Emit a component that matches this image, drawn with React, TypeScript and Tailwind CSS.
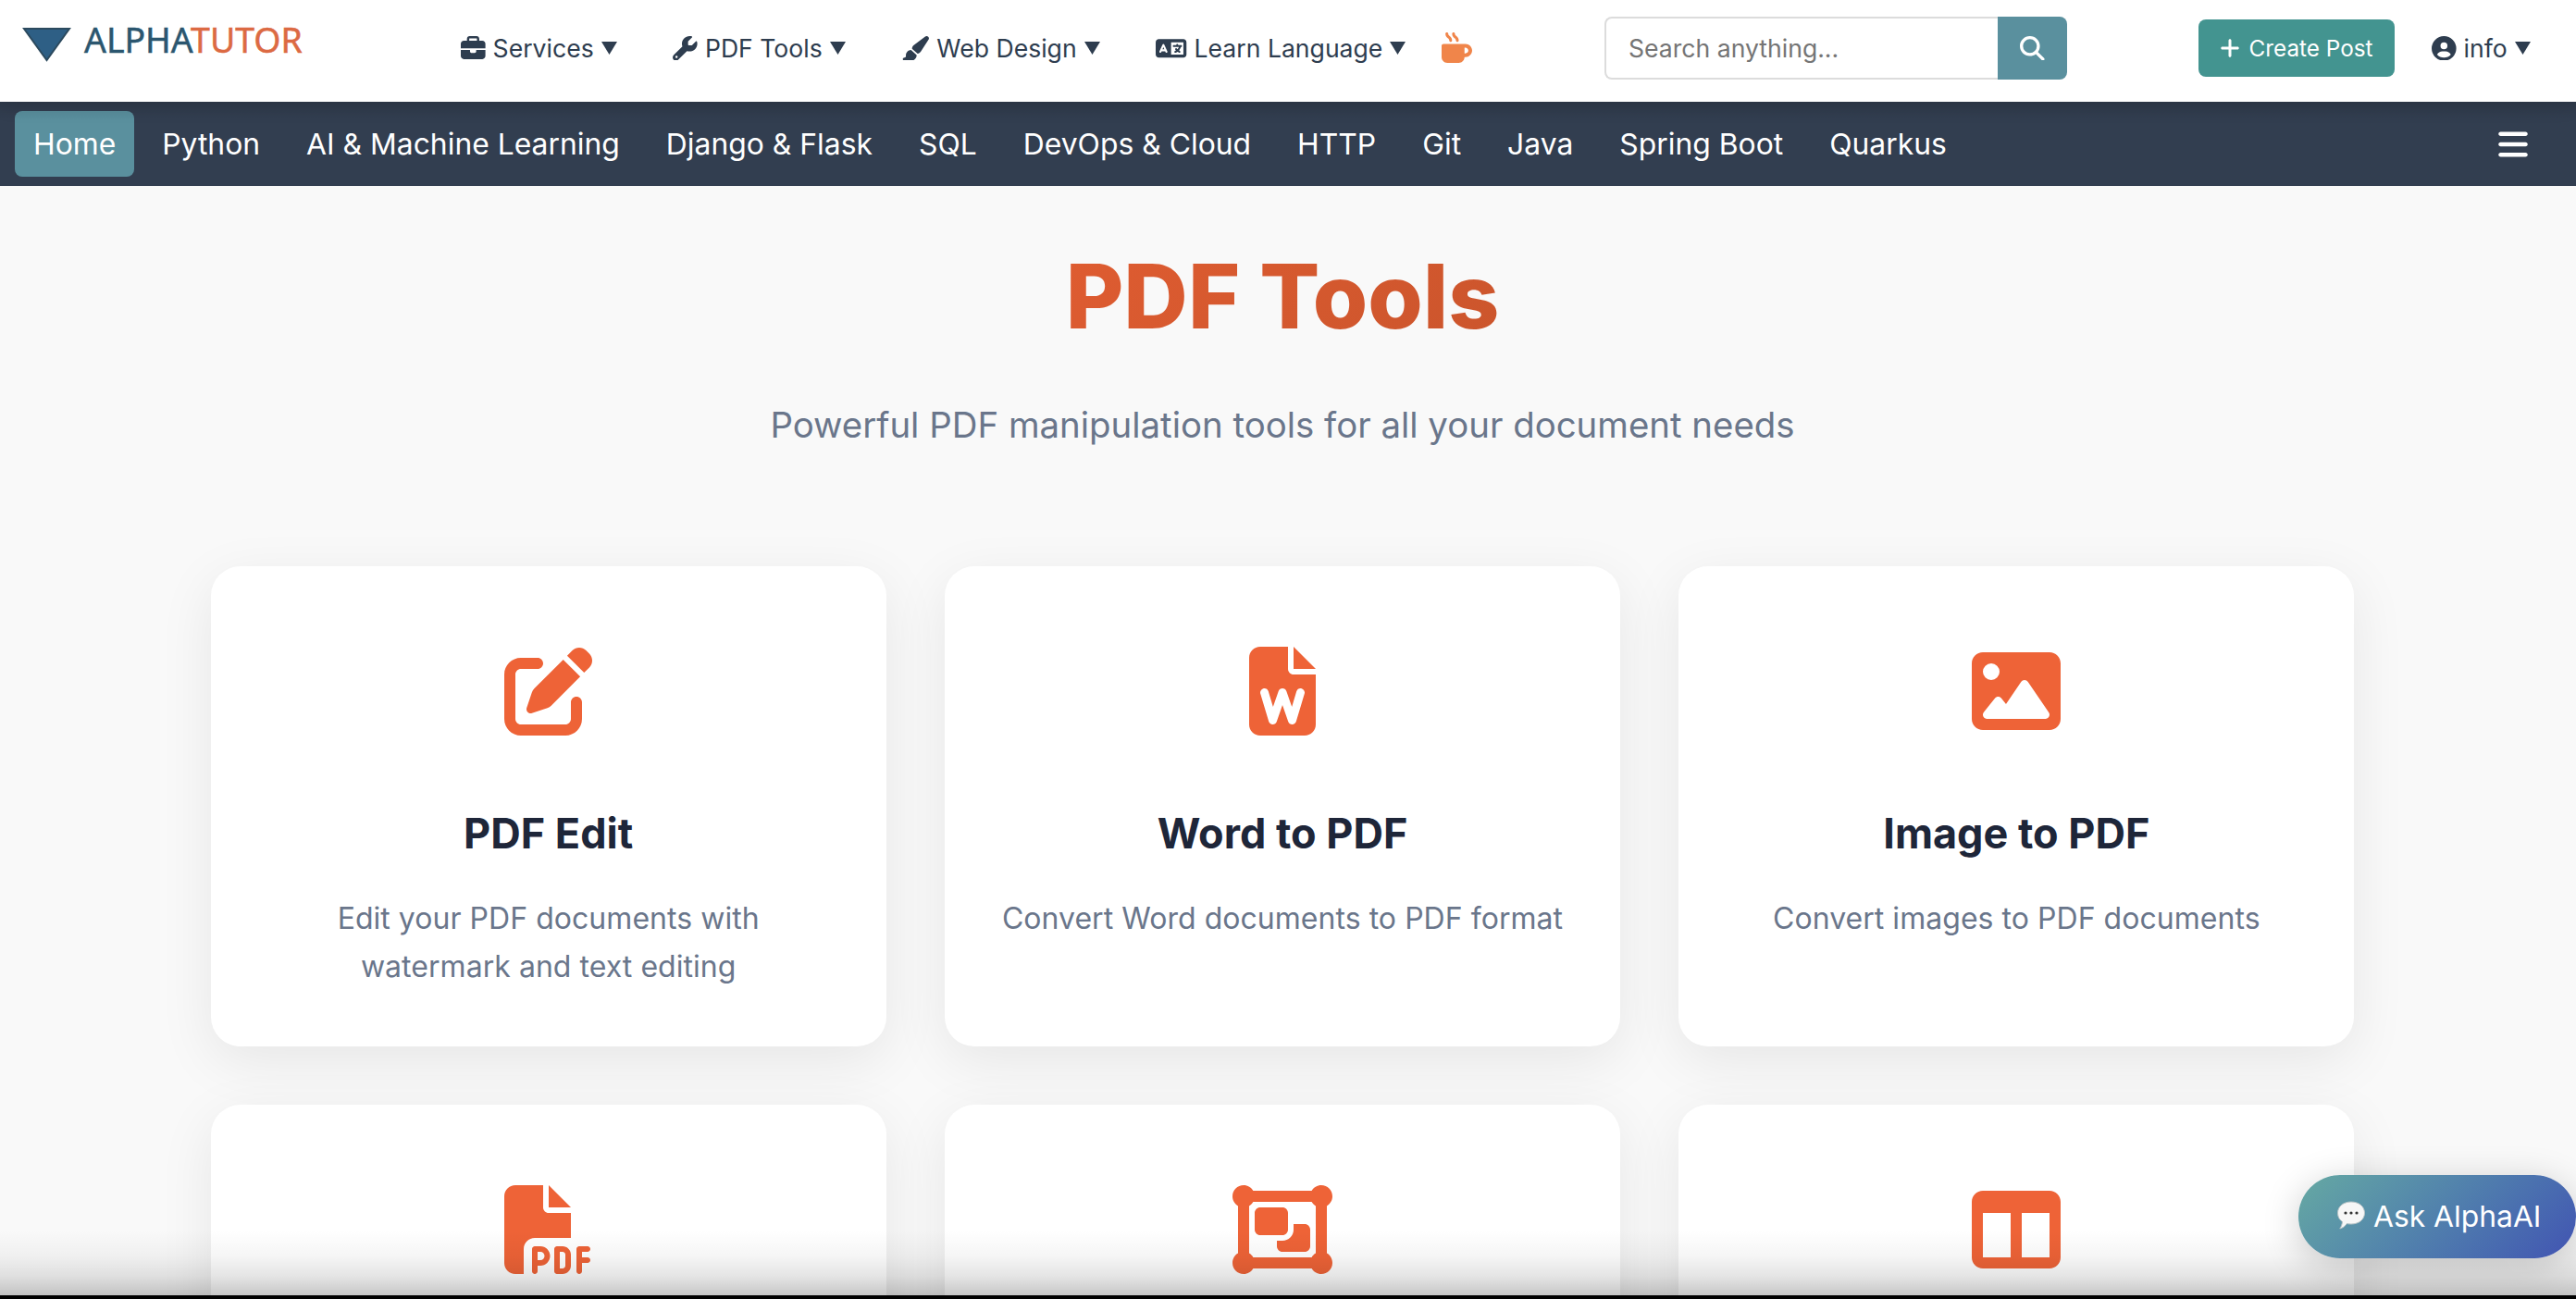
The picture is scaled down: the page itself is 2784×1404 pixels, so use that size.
import type { IconType } from "react-icons";
import {
  FaBars,
  FaBriefcase,
  FaCircleUser,
  FaFilePdf,
  FaFileWord,
  FaImage,
  FaLanguage,
  FaMagnifyingGlass,
  FaMugHot,
  FaObjectGroup,
  FaPaintbrush,
  FaPenToSquare,
  FaPlus,
  FaTableColumns,
  FaWrench
} from "react-icons/fa6";

type Menu = { label: string; icon: IconType; iconWidth: string };
type Tool = {
  title: string;
  description: string;
  icon: IconType;
  iconWidth: string;
};

const MENUS: Menu[] = [
  { label: "Services", icon: FaBriefcase, iconWidth: "w-[26.6px]" },
  { label: "PDF Tools", icon: FaWrench, iconWidth: "w-[26.6px]" },
  { label: "Web Design", icon: FaPaintbrush, iconWidth: "w-[30px]" },
  { label: "Learn Language", icon: FaLanguage, iconWidth: "w-[33.3px]" }
];

const TOPICS = [
  "Home",
  "Python",
  "AI & Machine Learning",
  "Django & Flask",
  "SQL",
  "DevOps & Cloud",
  "HTTP",
  "Git",
  "Java",
  "Spring Boot",
  "Quarkus"
];

const TOOLS: Tool[] = [
  {
    title: "PDF Edit",
    description: "Edit your PDF documents with watermark and text editing",
    icon: FaPenToSquare,
    iconWidth: "w-[96px]"
  },
  {
    title: "Word to PDF",
    description: "Convert Word documents to PDF format",
    icon: FaFileWord,
    iconWidth: "w-[72px]"
  },
  {
    title: "Image to PDF",
    description: "Convert images to PDF documents",
    icon: FaImage,
    iconWidth: "w-[96px]"
  },
  { title: "", description: "", icon: FaFilePdf, iconWidth: "w-[96px]" },
  { title: "", description: "", icon: FaObjectGroup, iconWidth: "w-[108px]" },
  { title: "", description: "", icon: FaTableColumns, iconWidth: "w-[96px]" }
];

function Caret() {
  return (
    <svg aria-hidden="true" width="17" height="14" viewBox="0 0 17 14">
      <path d="M0 0h17L8.5 14z" fill="currentColor" />
    </svg>
  );
}

function Logo() {
  return (
    <div className="flex h-full w-[474px] items-start pl-6">
      <svg
        aria-hidden="true"
        className="mt-[29px]"
        width="53"
        height="38"
        viewBox="0 0 53 38"
      >
        <path
          d="M2 2h49L26.5 36z"
          fill="#2e5f85"
          stroke="#2c4a5e"
          strokeWidth="2"
        />
      </svg>
      <span className="mt-[18px] ml-[14px] font-['Noto_Sans',sans-serif] text-[37.4px] leading-[50px] text-[#2b566f] [-webkit-text-stroke:0.5px_currentColor]">
        ALPHA<span className="text-[#dc6a43]">TUTOR</span>
      </span>
    </div>
  );
}

function TopBar() {
  return (
    <header className="relative z-20 h-[110px] bg-white pb-[6px] text-[26.6px] text-[#2e3d4f] shadow-[0_4px_20px_rgba(0,0,0,0.1)]">
      <div className="flex h-full items-center">
        <Logo />
        <nav className="flex w-[1260px] items-center pl-6">
          <div className="flex items-center gap-[60.6px]">
            {MENUS.map(({ label, icon: Icon, iconWidth }) => (
              <a key={label} className="flex items-center gap-[8px]">
                <Icon className={`h-[26.6px] ${iconWidth}`} />
                <span className="pt-0.5">{label}</span>
                <Caret />
              </a>
            ))}
          </div>
          <FaMugHot className="ml-[39px] text-[33px] text-[#f0854a]" />
        </nav>

        <form className="flex h-[68px] w-[500px]">
          <input
            type="text"
            placeholder="Search anything..."
            className="w-[425px] rounded-l-lg border-2 border-r-0 border-[#dcdcdc] pt-0.5 pl-6 placeholder:text-[#757575]"
          />
          <button
            type="button"
            className="flex flex-1 items-center justify-center rounded-r-lg bg-[#5a909e] text-white"
          >
            <FaMagnifyingGlass />
          </button>
        </form>

        <button
          type="button"
          className="ml-[142px] flex h-[62px] w-[212px] items-center justify-center gap-[9px] rounded-lg bg-[#439490] pr-0.5 text-[24.3px] text-white"
        >
          <FaPlus className="text-[24px]" />
          Create Post
        </button>

        <a className="ml-10 flex items-center gap-[8px]">
          <FaCircleUser />
          <span className="pt-0.5">info</span>
          <Caret />
        </a>
      </div>
    </header>
  );
}

function TopicBar() {
  return (
    <nav className="relative z-10 flex h-[91px] items-center justify-between bg-[#323e50] pr-[50px] pl-4 text-white">
      {/* shade cast by the white bar above */}
      <div className="pointer-events-none absolute inset-x-0 top-0 h-5 bg-linear-to-b from-black/8 to-transparent" />
      <ul className="flex items-center gap-[10px] text-[31.85px]">
        {TOPICS.map((topic) => (
          <li
            key={topic}
            className={
              topic === "Home"
                ? "rounded-lg bg-[#5a909e] px-5 leading-[71px]"
                : "px-5 leading-[71px]"
            }
          >
            {topic}
          </li>
        ))}
      </ul>
      <FaBars className="h-9 w-9" />
    </nav>
  );
}

function ToolCard({ title, description, icon: Icon, iconWidth }: Tool) {
  return (
    <article className="flex h-[519px] flex-col items-center rounded-[32px] bg-white pt-[87px] text-center shadow-[0_16px_60px_rgba(0,0,0,0.08)]">
      <Icon className={`h-24 text-[#ee6337] ${iconWidth}`} />
      <h2 className="mt-[79px] text-[45px] leading-[54px] font-bold text-[#1e2639]">
        {title}
      </h2>
      <p className="mt-[39px] max-w-[614px] text-[32px] leading-[52px] tracking-[0.04px] text-[#6a768b]">
        {description}
      </p>
    </article>
  );
}

function ChatButton() {
  return (
    <button
      type="button"
      className="absolute right-0 bottom-11 z-30 flex h-[90px] w-[300px] items-center rounded-full bg-linear-135 from-[#66a9a2] to-[#4253b2] pl-[41px] text-[31.8px] text-white shadow-[0_8px_40px_rgba(0,0,0,0.2)]"
    >
      <svg aria-hidden="true" width="32" height="34" viewBox="0 0 32 34">
        <path
          d="M16 1C7.500 1 1.500 6 1.500 13c0 4.500 2 7.500 5 9.500-.3 3-1.300 5.500-2.700 7.500 3.200-.8 5.800-2.700 7.400-5.400 1.500.3 3.100.4 4.800.4 8.500 0 14.500-5 14.500-12S24.500 1 16 1z"
          fill="#f7f7f7"
          stroke="#b9c4c6"
          strokeWidth="1"
        />
        <circle cx="10" cy="13" r="1.600" fill="#333" />
        <circle cx="16" cy="13" r="1.600" fill="#333" />
        <circle cx="22" cy="13" r="1.600" fill="#333" />
      </svg>
      <span className="ml-[8px]">Ask AlphaAI</span>
    </button>
  );
}

export default function App() {
  return (
    <div className="relative h-[1404px] w-[2784px] overflow-hidden bg-[#f9f9f9] font-['Inter',sans-serif]">
      <TopBar />
      <TopicBar />

      <main className="mr-3 border-t border-transparent">
        <div className="flex flex-col items-center pt-[58px]">
          <h1 className="bg-linear-135 from-[#df5c31] to-[#cb552c] bg-clip-text text-[96.2px] leading-[120px] font-extrabold text-transparent">
            PDF Tools
          </h1>
          <p className="mt-[49px] text-[38.4px] leading-[60px] text-[#6a768b]">
            Powerful PDF manipulation tools for all your document needs
          </p>
        </div>

        <div className="mx-auto mt-[123px] grid w-[2317px] grid-cols-3 gap-[63px]">
          {TOOLS.map((tool, i) => (
            <ToolCard key={i} {...tool} />
          ))}
        </div>
      </main>

      {/* bottom edge: soft shade ending in a black strip */}
      <div className="pointer-events-none absolute inset-x-0 bottom-1 z-20 h-[70px] bg-[linear-gradient(to_bottom,rgba(0,0,0,0),rgba(0,0,0,0.04)_40%,rgba(0,0,0,0.1)_70%,rgba(0,0,0,0.22))]" />
      <div className="absolute inset-x-0 bottom-0 z-20 h-1 bg-black" />
      <ChatButton />
    </div>
  );
}
